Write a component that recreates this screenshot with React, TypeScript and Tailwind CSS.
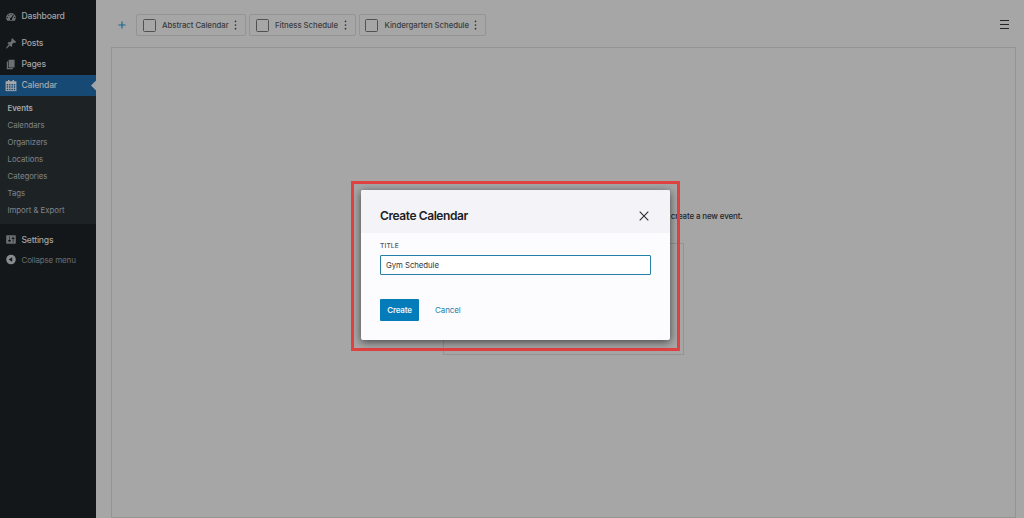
import type { ReactNode } from "react";

function Glyph({ children }: { children: ReactNode }) {
  return (
    <svg viewBox="0 0 20 20" className="size-[12px] shrink-0 -translate-y-[0.5px]" fill="currentColor" fillRule="evenodd">
      {children}
    </svg>
  );
}

const icons = {
  dashboard: (
    <path d="M3.76 17h12.48c1.1-1.37 1.76-3.11 1.76-5 0-4.42-3.58-8-8-8s-8 3.58-8 8c0 1.89.66 3.63 1.76 5zM9.2 5.5h1.6v1.6H9.2zM5.3 7.2h1.7v1.7H5.3zM13.8 6.5l1.2 1-3.1 5.6a2 2 0 1 1-1.7-1.1zM3.5 11h1.7v1.7H3.5zM14.8 11h1.7v1.7h-1.7z" />
  ),
  post: (
    <path d="M10.44 3.02l1.82-1.82 6.36 6.35-1.83 1.82c-1.05-.68-2.48-.57-3.41.36l-.75.75c-.92.93-1.04 2.35-.35 3.41l-1.83 1.82-2.41-2.41-2.8 2.79c-.42.42-3.38 2.71-3.8 2.29s1.86-3.39 2.28-3.81l2.79-2.79L4.1 9.36l1.83-1.82c1.05.69 2.48.57 3.4-.36l.75-.75c.93-.92 1.05-2.35.36-3.41z" />
  ),
  page: <path d="M6 15V2h10v13H6zm-1 1h8v2H3V5h2v11z" />,
  calendar: (
    <path d="M15 3h4v16.5H1V3h4V.8h2.5V3h5V.8H15zM2.9 7.4v2.5h2.4V7.4zM6.8 7.4v2.5h2.4V7.4zM10.8 7.4v2.5h2.4V7.4zM14.7 7.4v2.5h2.4V7.4zM2.9 11.4v2.5h2.4v-2.5zM6.8 11.4v2.5h2.4v-2.5zM10.8 11.4v2.5h2.4v-2.5zM14.7 11.4v2.5h2.4v-2.5zM2.9 15.4v2.4h2.4v-2.4zM6.8 15.4v2.4h2.4v-2.4zM10.8 15.4v2.4h2.4v-2.4zM14.7 15.4v2.4h2.4v-2.4z" />
  ),
  settings: (
    <path d="M18 16V4c0-.55-.45-1-1-1H3c-.55 0-1 .45-1 1v12c0 .55.45 1 1 1h14c.55 0 1-.45 1-1zM8 11h1c.55 0 1 .45 1 1s-.45 1-1 1H8v1.5c0 .28-.22.5-.5.5s-.5-.22-.5-.5V13H6c-.55 0-1-.45-1-1s.45-1 1-1h1V5.5c0-.28.22-.5.5-.5s.5.22.5.5V11zm5-2h-1c-.55 0-1-.45-1-1s.45-1 1-1h1V5.5c0-.28.22-.5.5-.5s.5.22.5.5V7h1c.55 0 1 .45 1 1s-.45 1-1 1h-1v5.5c0 .28-.22.5-.5.5s-.5-.22-.5-.5V9z" />
  ),
  collapse: (
    <path d="M10 2a8 8 0 1 1 0 16 8 8 0 0 1 0-16zm2 11.88V6.12L6.18 10z" />
  ),
};

function MenuItem({ icon, label }: { icon: ReactNode; label: string }) {
  return (
    <a className="flex h-[21px] items-center gap-[4.5px] pl-[5px] text-[8.6px] font-medium tracking-[-0.2px] text-[#a2a3a4]">
      <span className="flex text-[#6c7074]">
        <Glyph>{icon}</Glyph>
      </span>
      {label}
    </a>
  );
}

const subItems = ["Calendars", "Organizers", "Locations", "Categories", "Tags", "Import & Export"];

function Sidebar() {
  return (
    <nav className="flex w-[96px] shrink-0 flex-col bg-[#13171a] pt-[6px]">
      <MenuItem icon={icons.dashboard} label="Dashboard" />
      <div className="h-[6px]" />
      <MenuItem icon={icons.post} label="Posts" />
      <MenuItem icon={icons.page} label="Pages" />
      <a className="flex h-[21px] items-center gap-[4.5px] bg-[#164a74] pl-[5px] text-[8.6px] font-medium tracking-[-0.2px] text-[#a6a8aa]">
        <Glyph>{icons.calendar}</Glyph>
        <span className="grow">Calendar</span>
        <svg viewBox="0 0 5 10" className="h-[10px] w-[5px] -translate-y-[0.5px] fill-[#a3a4a5]">
          <path d="M5 0v10L0 5z" />
        </svg>
      </a>
      <div className="flex flex-col bg-[#1d2225] pt-[4px] pb-[5px] pl-[7.5px] text-[7.8px] tracking-[-0.03px] text-[#81868a]">
        <a className="flex h-[17px] items-center font-semibold text-[#a9aaab]">Events</a>
        {subItems.map((item) => (
          <a key={item} className="flex h-[17px] items-center">
            {item}
          </a>
        ))}
      </div>
      <div className="h-[5.5px]" />
      <MenuItem icon={icons.settings} label="Settings" />
      <a className="flex h-[19px] items-center gap-[4.5px] pl-[5px] text-[8px] tracking-[-0.15px] text-[#6b7074]">
        <span className="flex text-[#898c8e]">
          <Glyph>{icons.collapse}</Glyph>
        </span>
        Collapse menu
      </a>
    </nav>
  );
}

function CalendarChip({ label, size }: { label: string; size: string }) {
  return (
    <div className={`flex h-[22px] items-center rounded-[2px] border border-[#949494] pl-[5.5px] ${size}`}>
      <span className="size-[13px] shrink-0 rounded-[1.5px] border border-[#505153]" />
      <span className="ml-[6.5px] grow whitespace-nowrap pt-px">{label}</span>
      <svg viewBox="0 0 3 10" className="mr-[8px] h-[10px] w-[3px] fill-[#303133]">
        <circle cx="1.5" cy="1.3" r=".85" />
        <circle cx="1.5" cy="5" r=".85" />
        <circle cx="1.5" cy="8.7" r=".85" />
      </svg>
    </div>
  );
}

function Workspace() {
  return (
    <main className="flex grow flex-col pt-[14px] pr-[8.5px] pl-[15px]">
      <div className="flex h-[22px] items-center text-[7.8px] font-medium tracking-[-0.05px] text-[#393b3d]">
        <svg viewBox="0 0 8 8" className="mr-[10px] ml-[7px] size-[8px] stroke-[#16648c]" strokeWidth="1.1">
          <path d="M4 .4v7.2M.4 4h7.2" />
        </svg>
        <div className="flex grow gap-[3px]">
          <CalendarChip label="Abstract Calendar" size="w-[110px]" />
          <CalendarChip label="Fitness Schedule" size="w-[106.5px]" />
          <CalendarChip label="Kindergarten Schedule" size="w-[127.5px]" />
        </div>
        <svg viewBox="0 0 9 9" className="mr-[6.5px] mb-px size-[9px] stroke-[#242526]" strokeWidth="1">
          <path d="M0 .5h9M0 4.5h9M0 8.5h9" />
        </svg>
      </div>
      <section className="mt-[11px] flex h-[471px] flex-col items-center border border-[#949494] pt-[161px]">
        <p className="flex h-[13px] w-[358.5px] items-center justify-end whitespace-nowrap text-[8px] font-medium tracking-[-0.16px] text-[#242526]">
          create a new event.
        </p>
        <div className="mt-[21px] h-[112px] w-[241px] border border-[#949494]" />
      </section>
    </main>
  );
}

function CreateDialog() {
  return (
    <div className="absolute top-[181px] left-[351px] h-[170px] w-[329px] border-3 border-[#e04241] px-[7px] pt-[6px]">
      <div
        role="dialog"
        className="flex h-[150px] w-[309px] flex-col overflow-hidden rounded-[2px] bg-[#fcfcfe] shadow-[0_2px_9px_rgba(0,0,0,0.6)]"
      >
        <header className="flex h-[43px] shrink-0 items-center justify-between bg-[#f4f4f8] pt-[9px] pr-[21px] pl-[19px]">
          <h1 className="text-[12px] font-semibold tracking-[-0.42px] text-[#1d2125]">Create Calendar</h1>
          <svg viewBox="0 0 10 10" className="size-[10px] stroke-[#2b2e31]" strokeWidth="1.1">
            <path d="M.7.7l8.6 8.6M9.3.7L.7 9.3" />
          </svg>
        </header>
        <div className="flex flex-col items-start px-[19px] pt-[8px]">
          <label className="flex h-[10px] items-center pt-px text-[6.6px] font-medium tracking-[0.15px] text-[#53575c]">TITLE</label>
          <div className="mt-[4px] flex h-[20px] w-[271px] items-center rounded-[1px] border border-[#2580a7] bg-white pt-px pl-[5px] text-[7.8px] tracking-[-0.06px] text-[#34383d]">
            Gym Schedule
          </div>
          <div className="mt-[24px] flex items-center gap-[16px] text-[8px] font-medium">
            <button className="h-[22px] w-[39px] rounded-[1px] bg-[#047cba] font-semibold tracking-[-0.2px] text-[#e8f5fc]">Create</button>
            <button className="font-normal tracking-[-0.1px] text-[#277ca9]">Cancel</button>
          </div>
        </div>
      </div>
    </div>
  );
}

export default function App() {
  return (
    <div className="relative flex h-[518px] w-[1024px] overflow-hidden bg-[#a6a6a6] font-['Inter','Liberation_Sans',sans-serif] leading-none">
      <Sidebar />
      <Workspace />
      <CreateDialog />
    </div>
  );
}
